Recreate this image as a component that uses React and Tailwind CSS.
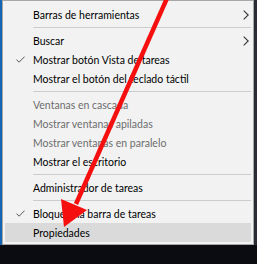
import { Fragment } from 'react';

const menu = [
  { label: 'Barras de herramientas', sub: true },
  { sep: true },
  { label: 'Buscar', sub: true },
  { label: 'Mostrar botón Vista de tareas', checked: true },
  { label: 'Mostrar el botón del teclado táctil' },
  { sep: true },
  { label: 'Ventanas en cascada', disabled: true },
  { label: 'Mostrar ventanas apiladas', disabled: true },
  { label: 'Mostrar ventanas en paralelo', disabled: true },
  { label: 'Mostrar el escritorio' },
  { sep: true },
  { label: 'Administrador de tareas' },
  { sep: true },
  { label: 'Bloquear la barra de tareas', checked: true },
  { label: 'Propiedades', active: true },
];

function Check() {
  return (
    <svg width="9" height="7" viewBox="0 0 9 7" className="absolute left-[11px] top-[6px]">
      <path d="M0.5 3.6 L3.1 6.2 L8.6 0.6" fill="none" stroke="#555" strokeWidth="1" />
    </svg>
  );
}

function Chevron() {
  return (
    <svg width="6" height="10" viewBox="0 0 6 10" className="absolute right-[2px] top-[5px]">
      <path d="M0.7 0.7 L5.2 5 L0.7 9.3" fill="none" stroke="#333" strokeWidth="1.1" />
    </svg>
  );
}

export default function App() {
  return (
    <div
      className="relative w-[257px] h-[264px] overflow-hidden flex flex-col bg-[#0b0c12]"
      style={{ fontFamily: 'Lato, "Noto Sans", sans-serif' }}
    >
      <div className="flex h-[245px] bg-[#1565b5]">
        <div className="ml-[2px] w-[252px] h-[245px] border border-[#a7a7a7] bg-[#f2f2f2] p-[2px] pt-[4px]">
          {menu.map((item, i) =>
            item.sep ? (
              <div key={i} className="h-[7px] flex items-center pl-[28px]">
                <div className="h-px w-full bg-[#cccccc]" />
              </div>
            ) : (
              <div
                key={i}
                className={`relative h-[19px] pl-[28px] pt-[2px] flex items-center text-[10.5px] leading-none ${
                  item.disabled ? 'text-[#6d6d6d]' : 'text-[#000000]'
                } ${item.active ? 'bg-[#dadada]' : ''}`}
              >
                {item.checked && <Check />}
                <span>{item.label}</span>
                {item.sub && <Chevron />}
              </div>
            )
          )}
        </div>
        <div className="flex-1 bg-[#2a2c33]" />
      </div>
      <div className="flex-1 bg-[#0b0c12]" />

      {/* red arrow drawn over the screenshot */}
      <svg width="257" height="264" className="absolute left-0 top-0 pointer-events-none">
        <line x1="168" y1="-4" x2="76" y2="204" stroke="#f50f0f" strokeWidth="4.5" />
        <polygon points="61,199 87,210 64,227" fill="#f50f0f" />
      </svg>
    </div>
  );
}
